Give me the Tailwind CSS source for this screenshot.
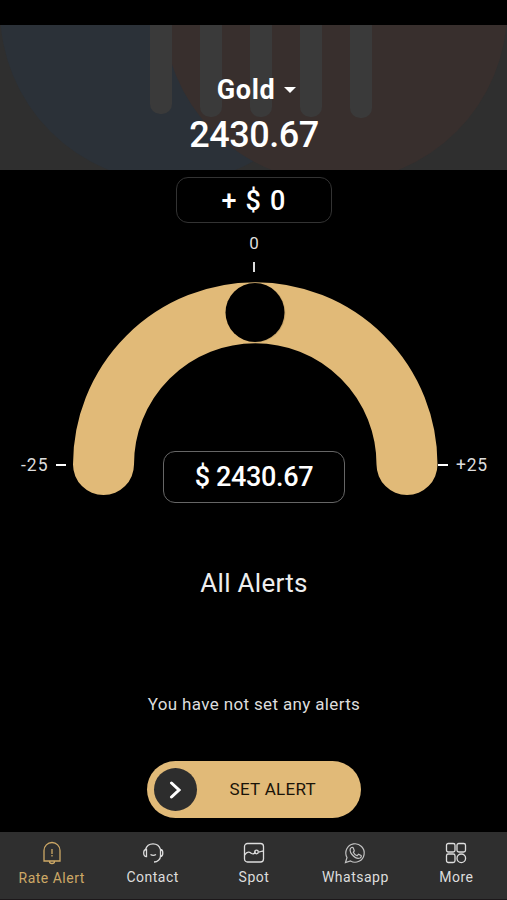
<!DOCTYPE html>
<html lang="en">
<head>
    <meta charset="UTF-8">
    <meta name="viewport" content="width=device-width, initial-scale=1.0">
    <title>Rate Alert</title>
    <script src="https://cdn.jsdelivr.net/npm/@tailwindcss/browser@4"></script>
</head>
<body class="bg-black text-white font-[Roboto,sans-serif]">
    <div id="app" class="flex flex-col w-full h-[900px] overflow-hidden pt-[25px]">
        <!-- Commodity header -->
        <header class="relative h-[145px] shrink-0 bg-[#2f2f2f] overflow-hidden">
            <svg class="absolute inset-0" width="507" height="145" viewBox="0 25 507 145">
                <circle cx="172" cy="10" r="172" fill="#2b3138"/>
                <circle cx="335" cy="10" r="172" fill="#382f2d"/>
                <g fill="#3a3a3a">
                    <rect x="150" y="0" width="22" height="114" rx="10"/>
                    <rect x="200" y="0" width="22" height="117" rx="10"/>
                    <rect x="250" y="0" width="22" height="117" rx="10"/>
                    <rect x="300" y="0" width="22" height="117" rx="10"/>
                    <rect x="350" y="0" width="22" height="118" rx="10"/>
                </g>
            </svg>
            <div class="relative flex flex-col items-center pt-[49px]">
                <button class="flex items-center gap-[9px] pl-[6px] text-[27px] leading-8 font-bold tracking-[0.6px]">
                    Gold
                    <svg width="12" height="6" viewBox="0 0 12 6" fill="currentColor"><path d="M0 0h12L6 6z"/></svg>
                </button>
                <p class="mt-[9px] pl-px text-[36px] leading-10 font-medium tracking-[-0.5px]">2430.67</p>
            </div>
        </header>

        <main class="flex flex-col items-center grow">
            <div class="mt-[7px] flex items-center justify-center w-[156px] h-[46px] pt-[2px] pl-px rounded-xl border border-[#333] text-[27px] font-medium tracking-[1.2px]">+ $ 0</div>
            <p class="mt-[10px] pl-px text-[17px] leading-5 text-[#ddd]">0</p>
            <div class="mt-[9px] w-[2px] h-[10px] bg-[#ddd]"></div>

            <!-- Dial -->
            <div class="relative mt-[9px] w-full h-[215px]">
                <svg class="absolute inset-0" width="507" height="215" viewBox="0 281 507 215">
                    <path d="M103.500 464.500A151.500 151.500 0 0 1 407 464.500" fill="none" stroke="#e1ba78" stroke-width="61" stroke-linecap="round"/>
                    <circle cx="256" cy="313" r="29.500" fill="#b9975f" opacity=".6"/>
                    <circle cx="255" cy="312.500" r="29.500" fill="#000"/>
                </svg>
                <div class="relative flex items-center justify-between pt-[170px] h-[221px]">
                    <div class="flex items-center justify-between w-[70px] pl-[21px] pr-[4px] pb-6 text-[17.500px] leading-6 text-[#ddd] tracking-[1px]">-25<span class="w-[10px] h-[2px] bg-white"></span></div>
                    <div class="flex items-center justify-center w-[182px] h-[52px] pt-[2px] rounded-xl border border-[#666] text-[27px] font-medium tracking-[-0.35px]">$ 2430.67</div>
                    <div class="flex items-center gap-[8px] w-[69px] pb-6 text-[17.500px] leading-6 text-[#ddd] tracking-[0.8px]"><span class="w-[10px] h-[2px] bg-white"></span>+25</div>
                </div>
            </div>

            <h2 class="mt-[71px] text-[26px] leading-8 text-[#eee] tracking-[0.3px] pl-px">All Alerts</h2>
            <p class="mt-[93px] text-[17px] leading-6 text-[#ddd] tracking-[0.35px] pl-px">You have not set any alerts</p>
            <button class="mt-[45px] flex items-center w-[214px] h-[57px] rounded-full bg-[#e1ba78] pl-[7px] text-[#1a1408]">
                <span class="flex items-center justify-center size-[43px] rounded-full bg-[#2d2d2d] text-white">
                    <svg width="12" height="18" viewBox="0 0 12 18" fill="none" stroke="currentColor" stroke-width="3" stroke-linecap="round"><path d="M2.500 2 10 9l-7.500 7"/></svg>
                </span>
                <span class="ml-[33px] text-[17px] tracking-[0.3px]">SET ALERT</span>
            </button>
        </main>

        <nav class="grid grid-cols-5 h-[68px] shrink-0 bg-[#2f2f2f] border-b border-[#1c181a] text-[14px] leading-5 text-[#ddd] tracking-[0.5px]">
            <a class="flex flex-col items-center pt-[9px] pl-[2px] text-[#cda866]">
                <svg width="24" height="24" viewBox="0 0 24 24" fill="none" stroke="currentColor" stroke-width="1.300"><path d="M4 20V9.500a8 8 0 0 1 16 0V20zM9.500 20.500a2.500 2 0 0 0 5 0M12 8v5M12 14v1.500"/></svg>
                <span class="mt-[3px]">Rate Alert</span>
            </a>
            <a class="flex flex-col items-center pt-[9px] pl-px">
                <svg width="24" height="24" viewBox="0 0 24 24" fill="none" stroke="currentColor" stroke-width="1.300"><path d="M4.500 8.500a7.800 7.800 0 0 1 15 0v6.500c0 3.500-3 6-6.500 6M5.500 8.500C3.500 8.500 2.700 9.500 2.700 12s.8 3.500 2.800 3.500zM19.500 8.500c2 0 2.300 1 2.300 3.500s-.3 3.500-2.300 3.500M9.500 13.500c1.500 1 4 1 5.500 0"/></svg>
                <span class="mt-[2px]">Contact</span>
            </a>
            <a class="flex flex-col items-center pt-[9px] pl-px">
                <svg width="24" height="24" viewBox="0 0 24 24" fill="none" stroke="currentColor" stroke-width="1.300"><rect x="2.500" y="2.500" width="19" height="18.500" rx="3"/><path d="M2.500 14c3-4 5-3 7-1.500 2 1 3 0 4-2M21.500 10c-2 0-3 1-5 1"/><circle cx="14.500" cy="11" r="1.800"/></svg>
                <span class="mt-[2px]">Spot</span>
            </a>
            <a class="flex flex-col items-center pt-[9px] pl-px">
                <svg width="24" height="24" viewBox="0 0 24 24" fill="none" stroke="currentColor" stroke-opacity=".85" stroke-width="1.200"><path d="M2.500 21.500 4 16.500a9.200 9.200 0 1 1 3.500 3.500z"/><path d="M8.500 6.500c-2 1-2 4 .5 7s5.500 4.500 8 3.500c1.500-.8 1.500-2 1-2.500l-2.500-1.200-1.500 1.500c-2-.8-3-2-3.700-3.500l1-1.500-1-2.800c-.3-.6-1-.7-1.800-.5z"/></svg>
                <span class="mt-[2px]">Whatsapp</span>
            </a>
            <a class="flex flex-col items-center pt-[9px]">
                <svg width="24" height="24" viewBox="0 0 24 24" fill="none" stroke="currentColor" stroke-width="1.300"><rect x="2.500" y="2.500" width="8.500" height="8.500" rx="1.800"/><rect x="13" y="2.500" width="8.500" height="8.500" rx="1.800"/><rect x="2.500" y="13" width="8.500" height="8.500" rx="1.800"/><circle cx="17.300" cy="17.300" r="4.300"/></svg>
                <span class="mt-[2px]">More</span>
            </a>
        </nav>
    </div>
</body>
</html>
